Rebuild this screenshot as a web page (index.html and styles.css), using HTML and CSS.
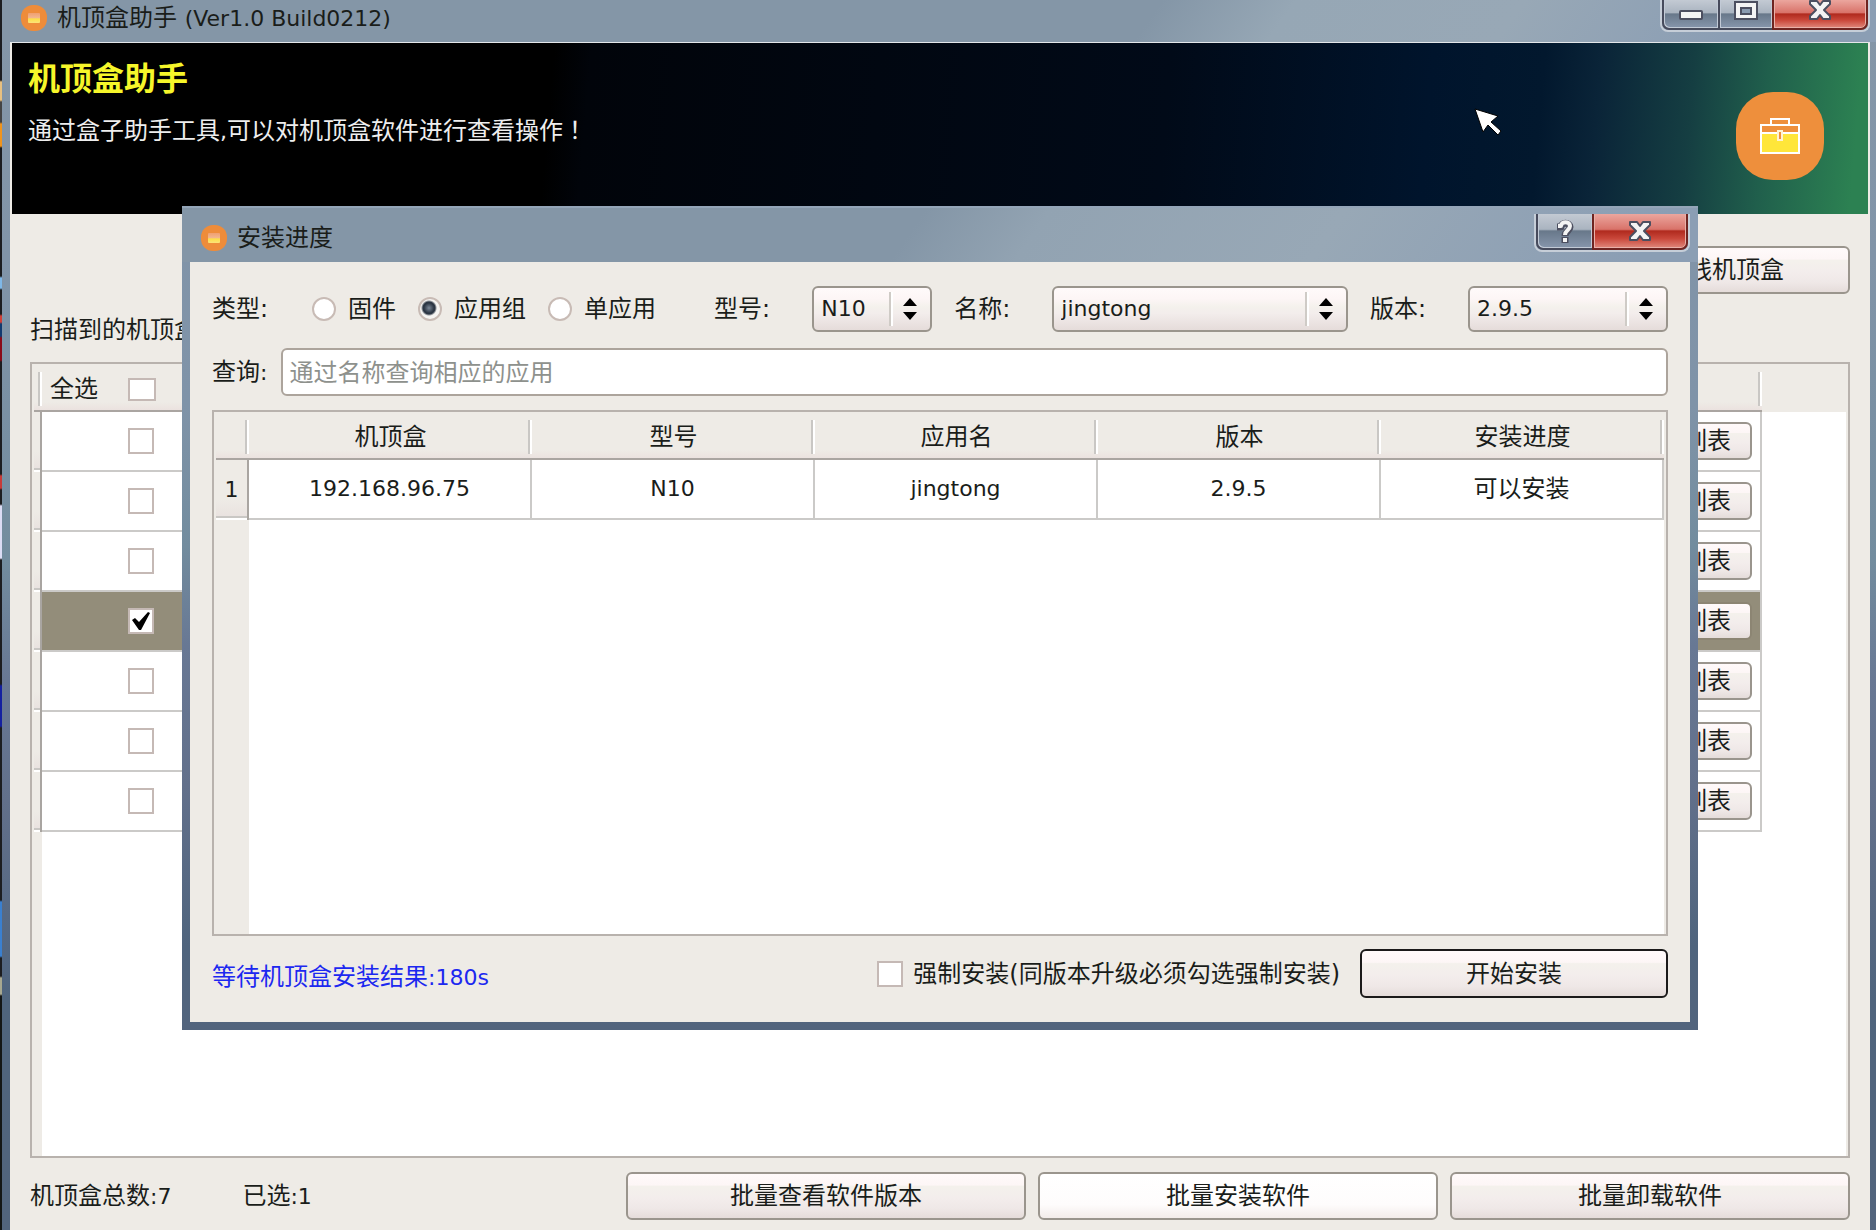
FILE: index.html
```html
<!DOCTYPE html>
<html lang="zh-CN">
<head>
<meta charset="utf-8">
<title>机顶盒助手</title>
<link rel="stylesheet" href="styles.css">
</head>
<body>
<svg class="defs" width="0" height="0" aria-hidden="true">
  <defs>
    <linearGradient id="lid" x1="0" y1="0" x2="0" y2="1">
      <stop offset="0" stop-color="#f0a070"/>
      <stop offset="0.45" stop-color="#f2b48a"/>
      <stop offset="0.6" stop-color="#fde047"/>
      <stop offset="1" stop-color="#fbe27a"/>
    </linearGradient>
    <symbol id="app-icon" viewBox="0 0 26 26">
      <rect x="0" y="0" width="26" height="26" rx="12" fill="#ee8c3a"/>
      <rect x="7" y="8" width="12" height="10" rx="1" fill="url(#lid)"/>
    </symbol>
    <symbol id="glyph-close" viewBox="0 0 24 20">
      <path d="M2 1h7l3 4 3-4h7v3l-6 6 6 6v3h-7l-3-4-3 4H2v-3l6-6-6-6z" fill="#f4f4f4" stroke="#4c4f60" stroke-width="2" stroke-linejoin="round"/>
    </symbol>
  </defs>
</svg>

<div class="window">
  <header class="titlebar">
    <div class="caption">
      <svg class="app-icon"><use href="#app-icon"/></svg>
      <span>机顶盒助手 <span class="lat">(Ver1.0 Build0212)</span></span>
    </div>
    <div class="window-buttons">
      <button class="wbtn wbtn-min" type="button" aria-label="最小化">
        <svg width="24" height="10" viewBox="0 0 24 10"><rect x="1" y="1" width="22" height="8" rx="1" fill="#f4f4f4" stroke="#4c4f60" stroke-width="2"/></svg>
      </button>
      <button class="wbtn wbtn-max" type="button" aria-label="最大化">
        <svg width="24" height="19" viewBox="0 0 24 19"><path d="M1 1h22v17H1z" fill="#f4f4f4" stroke="#4c4f60" stroke-width="2"/><path d="M7 7h10v6H7z" fill="#8a9bb0" stroke="#4c4f60" stroke-width="2"/></svg>
      </button>
      <button class="wbtn wbtn-close" type="button" aria-label="关闭"><svg width="24" height="20"><use href="#glyph-close"/></svg></button>
    </div>
  </header>

  <main class="client">
    <section class="banner">
      <div class="banner-text">
        <h1>机顶盒助手</h1>
        <p>通过盒子助手工具<span class="lat">,</span>可以对机顶盒软件进行查看操作<span class="centered-mark" lang="zh-TW">！</span></p>
      </div>
      <svg class="toolbox" width="88" height="88" viewBox="0 0 88 88">
        <rect width="88" height="88" rx="37" fill="#ee8f3c"/>
        <path d="M25 41h38v20H25z" fill="#ffe63a"/>
        <path d="M25 33h38v28H25zM35 33v-6h18v6M25 41h38" fill="none" stroke="#fff" stroke-width="2"/>
        <path d="M42 39h4v9h-4z" fill="#ee8f3c" stroke="#fff3d0" stroke-width="2"/>
      </svg>
      <svg class="pointer" width="28" height="29" viewBox="0 0 28 29">
        <path d="M1 1l23 7-7 6 10 9-3 4-10-10-5 7z" fill="#fff" stroke="#000" stroke-width="1"/>
      </svg>
    </section>

    <div class="panel">
      <div class="scan-row"><button class="btn btn-scan" type="button">扫描在线机顶盒</button></div>
      <p class="list-label">扫描到的机顶盒</p>
      <div class="grid-box">
        <table class="grid boxes">
          <colgroup><col class="c-head"><col class="c-check"><col><col class="c-action"><col class="c-rest"></colgroup>
          <thead>
            <tr>
              <th></th>
              <th><label class="select-all">全选<input class="tick tick-wide" type="checkbox"></label></th>
              <th></th><th></th><th class="rest"></th>
            </tr>
          </thead>
          <tbody>
            <tr><th></th><td><input class="tick" type="checkbox" aria-label="选择 1"></td><td></td><td class="action"><button class="btn btn-row" type="button">软件列表</button></td><td class="rest"></td></tr>
            <tr><th></th><td><input class="tick" type="checkbox" aria-label="选择 2"></td><td></td><td class="action"><button class="btn btn-row" type="button">软件列表</button></td><td class="rest"></td></tr>
            <tr><th></th><td><input class="tick" type="checkbox" aria-label="选择 3"></td><td></td><td class="action"><button class="btn btn-row" type="button">软件列表</button></td><td class="rest"></td></tr>
            <tr class="selected"><th></th><td><input class="tick" type="checkbox" aria-label="选择 4" checked></td><td></td><td class="action"><button class="btn btn-row" type="button">软件列表</button></td><td class="rest"></td></tr>
            <tr><th></th><td><input class="tick" type="checkbox" aria-label="选择 5"></td><td></td><td class="action"><button class="btn btn-row" type="button">软件列表</button></td><td class="rest"></td></tr>
            <tr><th></th><td><input class="tick" type="checkbox" aria-label="选择 6"></td><td></td><td class="action"><button class="btn btn-row" type="button">软件列表</button></td><td class="rest"></td></tr>
            <tr><th></th><td><input class="tick" type="checkbox" aria-label="选择 7"></td><td></td><td class="action"><button class="btn btn-row" type="button">软件列表</button></td><td class="rest"></td></tr>
          </tbody>
        </table>
      </div>
      <footer class="actions">
        <div class="counts">
          <span>机顶盒总数<span class="lat">:7</span></span>
          <span>已选<span class="lat">:1</span></span>
        </div>
        <button class="btn" type="button">批量查看软件版本</button>
        <button class="btn btn-hot" type="button">批量安装软件</button>
        <button class="btn" type="button">批量卸载软件</button>
      </footer>
    </div>
  </main>
</div>

<div class="dialog" role="dialog" aria-labelledby="dialog-title">
  <header class="dialog-titlebar">
    <div class="caption">
      <svg class="app-icon"><use href="#app-icon"/></svg>
      <span id="dialog-title">安装进度</span>
    </div>
    <div class="window-buttons">
      <button class="wbtn wbtn-help" type="button" aria-label="帮助">
        <svg width="22" height="26" viewBox="0 0 22 26"><g fill="none" stroke-linejoin="round"><path d="M3 9h4c0-5 9-5 9 0 0 4-5 4-5 9M11 19v6" stroke="#4c4f60" stroke-width="7"/><path d="M4 8h3c0-5 9-5 9 0 0 4-5 4-5 9M11 20v4" stroke="#f4f4f4" stroke-width="4"/></g></svg>
      </button>
      <button class="wbtn wbtn-close" type="button" aria-label="关闭"><svg width="24" height="20"><use href="#glyph-close"/></svg></button>
    </div>
  </header>
  <form class="dialog-body">
    <div class="filters">
      <div class="types" role="radiogroup" aria-labelledby="type-label">
        <span id="type-label" class="types-label">类型:</span>
        <label><input class="dot" type="radio" name="type">固件</label>
        <label><input class="dot" type="radio" name="type" checked>应用组</label>
        <label><input class="dot" type="radio" name="type">单应用</label>
      </div>
      <div class="field">
        <label for="model">型号:</label>
        <select id="model" class="pick pick-model"><option>N10</option></select>
      </div>
      <div class="field field-grow">
        <label for="name">名称:</label>
        <select id="name" class="pick pick-name"><option>jingtong</option></select>
      </div>
      <div class="field">
        <label for="version">版本:</label>
        <select id="version" class="pick pick-version"><option>2.9.5</option></select>
      </div>
    </div>
    <div class="query">
      <label for="query">查询<span class="lat">:</span></label>
      <input id="query" type="text" placeholder="通过名称查询相应的应用">
    </div>
    <div class="grid-box progress-box">
      <table class="grid progress">
        <colgroup><col class="c-num"><col><col><col><col><col></colgroup>
        <thead>
          <tr><th></th><th>机顶盒</th><th>型号</th><th>应用名</th><th>版本</th><th>安装进度</th></tr>
        </thead>
        <tbody>
          <tr><th class="lat">1</th><td class="lat">192.168.96.75</td><td class="lat">N10</td><td class="lat">jingtong</td><td class="lat">2.9.5</td><td>可以安装</td></tr>
        </tbody>
      </table>
    </div>
    <div class="dialog-footer">
      <p class="status">等待机顶盒安装结果<span class="lat">:180s</span></p>
      <label class="force"><input class="tick" type="checkbox"><span>强制安装(同版本升级必须勾选强制安装)</span></label>
      <button class="btn btn-default" type="button">开始安装</button>
    </div>
  </form>
</div>
</body>
</html>
```

FILE: styles.css
```css
:root {
  --face: #eeebe6;
  --line: #b8b2ad;
  --cell: #cbcac8;
  --frame: linear-gradient(180deg, #8496a7 0, #8194a8 260px, #728c9e 560px, #687894 680px, #62708b 800px, #4f647d 1000px, #52647d 100%);
}

* { box-sizing: border-box; }

body {
  margin: 0;
  min-height: 100vh;
  display: flex;
  position: relative;
  padding-left: 2px;
  font: 24px/32px "DejaVu Sans", "Noto Sans CJK SC", sans-serif;
  color: #1a1d1a;
  background: linear-gradient(180deg, #1c1d20 80px, #e8c080 82px 100px, #444 102px 122px, #f0941c 124px 146px, #1c1d20 148px 276px, #7fb8e8 278px 288px, #1c1d20 290px 314px, #d04038 316px 322px, #123a70 324px 336px, #8a0a18 338px 360px, #1c1d20 362px 474px, #c83a38 476px 488px, #1c1d20 490px 504px, #dcdcf4 506px 558px, #1c1d20 560px 684px, #1420a0 686px 726px, #1c1d20 728px 900px, #3a80d0 902px 956px, #1c1d20 958px 976px, #a8a890 978px 994px, #141616 996px);
}

.defs { position: absolute; }
.lat { font-size: 22px; }
h1, p { margin: 0; font-weight: 400; }
button, input, select { font: inherit; color: inherit; margin: 0; }

/* Window frames */
.window {
  flex: 1;
  display: flex;
  flex-direction: column;
  padding: 0 6px 0 8px;
  background: var(--frame);
}

.titlebar {
  display: flex;
  justify-content: space-between;
  height: 42px;
  margin: 0 -6px 0 -8px;
  padding: 0 6px 0 19px;
  background: linear-gradient(125deg, #8496a7 0 61%, #96a7b5 68%, #98a8b6 80%, #8b9eb4 92%, #8b9eb4 100%);
}

.caption { display: flex; align-items: center; gap: 10px; }
.titlebar .caption { height: 36px; }
.app-icon { width: 26px; height: 26px; }

.window-buttons {
  display: flex;
  border: solid #c6ced8;
  border-width: 0 2px 2px;
  border-radius: 0 0 8px 8px;
}
.titlebar .window-buttons { height: 32px; }

.wbtn {
  display: flex;
  align-items: center;
  justify-content: center;
  width: 54px;
  padding: 0;
  border: solid #474b5c;
  border-width: 0 0 2px 2px;
  background: linear-gradient(180deg, #c3cad3 0, #aab4c0 45%, #68788a 50%, #8796ac 100%);
  box-shadow: inset 1px -1px 0 #c2cad6, inset -1px 0 0 #c2cad6;
}
.wbtn:first-child { border-radius: 0 0 0 7px; width: 56px; }
.wbtn-min { align-items: flex-end; padding-bottom: 8px; }
.titlebar .wbtn-max, .titlebar .wbtn-close { padding-bottom: 8px; }
.wbtn-close {
  width: 96px;
  border-color: #6f2420;
  border-right-width: 2px;
  border-radius: 0 0 7px 0;
  background: linear-gradient(180deg, #eba69e 0, #d9736a 45%, #b02a1e 50%, #c9473a 72%, #e0887c 100%);
  box-shadow: inset 1px -1px 0 #e9b0a8, inset -1px 0 0 #e9b0a8;
}

.client {
  flex: 1;
  display: flex;
  flex-direction: column;
  border: 0 solid #e4e7ea;
  border-top-width: 1px;
  background: var(--face);
}

/* Banner */
.banner {
  position: relative;
  display: flex;
  justify-content: space-between;
  height: 171px;
  margin: 0 2px;
  padding: 20px 44px 0 16px;
  color: #eee;
  background: linear-gradient(95deg, #000 0 29%, #01040a 31%, #010a18 62%, #00142c 76%, #02182e 82%, #0a2438 85%, #153e42 90%, #205f4c 94%, #2c8152 99%);
}
.banner h1 { font-size: 32px; line-height: 32px; font-weight: 700; color: #f6f62a; }
.banner p { margin-top: 18px; }
.centered-mark { font-family: "Noto Sans CJK TC", sans-serif; }
.toolbox { margin-top: 29px; }
.pointer { position: absolute; left: 1462px; top: 65px; }

/* Main panel */
.panel { flex: 1; display: flex; flex-direction: column; padding: 32px 20px 10px; }
.scan-row { display: flex; justify-content: flex-end; }
.list-label { margin: 20px 0 16px; }

.btn {
  height: 48px;
  padding: 0;
  border: 2px solid #9a958d;
  border-radius: 6px;
  background: linear-gradient(180deg, #fffafa 0, #fdf6f6 25%, #f4f1ec 28%, #f3edec 55%, #efe8e7 78%, #e5dcda 100%);
}
.btn-scan { width: 300px; }
.btn-hot { background: linear-gradient(180deg, #fff 0, #fefcfc 70%, #f3ecea 100%); }
.btn-default { border-color: #1b1a1a; }
.btn-row { display: block; width: 138px; height: 38px; line-height: 32px; }

.grid-box { border: 2px solid var(--line); padding: 0 2px; background: #fff; }
.panel .grid-box {
  flex: 1;
  min-height: 796px;
  background: linear-gradient(90deg, var(--face) 10px, #fff 10px calc(100% - 2px), var(--face) 0);
}

.grid { width: 100%; table-layout: fixed; border-collapse: separate; border-spacing: 0; }
.grid th, .grid td { padding: 0; font-weight: 400; }
.grid thead th {
  height: 48px;
  padding-top: 4px;
  border-bottom: 2px solid #aaa5a1;
  background:
    linear-gradient(#c9c7c4, #c9c7c4) right 2px top 8px / 2px 34px no-repeat,
    linear-gradient(#fff, #fff) right 0 top 8px / 2px 34px no-repeat,
    linear-gradient(180deg, var(--face) 0 38px, #ebe2df 46px);
}
.grid tbody td {
  height: 60px;
  border: solid var(--cell);
  border-width: 0 2px 2px 0;
  background: #fff;
}
.grid tbody th {
  border-right: 2px solid #a9a5a1;
  background:
    linear-gradient(#c9c7c4, #c9c7c4) left 0 bottom 2px / 100% 2px no-repeat,
    linear-gradient(#fff, #fff) left 0 bottom 0 / 100% 2px no-repeat,
    linear-gradient(180deg, var(--face) 40px, #e8e0de 60px);
}

.c-head { width: 8px; }
.c-check { width: 240px; }
.c-action { width: 240px; }
.c-rest { width: 84px; }
.grid thead th.rest { background: var(--face); border-bottom-color: var(--face); }
.grid tbody td.rest { border: 0; }
.boxes tbody td:nth-child(2) { padding-left: 86px; border-right: 0; }
.boxes .action .btn { margin-left: auto; margin-right: 8px; }
.boxes .selected td:not(.rest) { background: #938d7a; }
.boxes .selected .btn { border-color: #8c8573; }
.select-all { display: flex; align-items: center; gap: 30px; padding-left: 8px; }

.tick {
  appearance: none;
  display: block;
  flex: none;
  width: 26px;
  height: 26px;
  border: 2px solid #c5b9b5;
  background: #fff;
}
.tick-wide { width: 28px; height: 23px; }
.tick:checked {
  background: #fff url("data:image/svg+xml,%3Csvg xmlns='http://www.w3.org/2000/svg' width='22' height='22'%3E%3Cpath d='M2 10l3-2 4 4 9-10 2 1-9 17H9z'/%3E%3C/svg%3E") center no-repeat;
}

.actions { display: grid; grid-template-columns: 584px 1fr 1fr 1fr; column-gap: 12px; margin-top: 14px; }
.counts { display: flex; align-items: center; gap: 71px; }

/* Install dialog */
.dialog {
  position: absolute;
  left: 182px;
  right: 178px;
  top: 206px;
  padding: 0 8px 8px;
  background:
    linear-gradient(125deg, #8496a7 0 48%, #92a3b2 56%, #98a8b6 75%, #8b9eb4 96%) top / 100% 56px no-repeat,
    linear-gradient(180deg, #8194a8 0, #7f93a8 200px, #728c9e 340px, #687894 440px, #62708b 580px, #4f647d 740px, #52647d 100%);
  box-shadow: inset 0 2px 0 #94a5b8;
}
.dialog-titlebar { display: flex; justify-content: space-between; height: 56px; padding: 8px 0 10px 11px; }
.dialog .caption { height: 48px; }

.dialog-body { padding: 24px 22px; background: var(--face); }
.filters { display: flex; gap: 22px; height: 46px; }
.types { display: flex; align-items: center; gap: 22px; margin-right: 36px; }
.types label { display: flex; align-items: center; gap: 12px; }
.types-label { margin-right: 22px; }
.field { display: flex; align-items: center; gap: 42px; }
.field-grow { flex: 1; }

.dot {
  appearance: none;
  width: 24px;
  height: 24px;
  border: 2px solid #c8bbb5;
  border-radius: 50%;
  background: #fff;
}
.dot:checked { background: radial-gradient(circle at 9px 9px, #7c8898 0, #2c3644 5px, #2c3644 6px, transparent 8px), #f6f4f2; }

.pick {
  appearance: none;
  height: 46px;
  padding: 0 44px 0 7px;
  border: 2px solid #9a958d;
  border-radius: 6px;
  font-size: 22px;
  background:
    url("data:image/svg+xml,%3Csvg xmlns='http://www.w3.org/2000/svg' width='14' height='22'%3E%3Cpath d='M7 0l7 8H0zM7 22l7-8H0z'/%3E%3C/svg%3E") right 13px center no-repeat,
    linear-gradient(#cfcbc6, #cfcbc6) right 39px center / 2px 34px no-repeat,
    linear-gradient(#fff, #fff) right 37px center / 2px 34px no-repeat,
    linear-gradient(180deg, #fffafa 0, #fdf6f6 25%, #f4f1ec 45%, #f3edec 60%, #e5dcda 100%);
}
.pick-model { width: 120px; }
.pick-name { flex: 1; min-width: 0; }
.pick-version { width: 200px; }

.query { display: flex; align-items: center; gap: 14px; margin-top: 16px; }
.query input {
  flex: 1;
  min-width: 0;
  height: 48px;
  padding: 2px 6px 0;
  border: 2px solid #aca49c;
  border-radius: 6px;
  background: #fff;
}
.query input::placeholder { color: #8e918d; opacity: 1; }

.progress-box {
  height: 526px;
  margin-top: 14px;
  background: linear-gradient(90deg, var(--face) 35px, #fff 35px calc(100% - 2px), var(--face) 0);
}
.progress { text-align: center; }
.c-num { width: 33px; }

.dialog-footer { display: flex; align-items: center; margin-top: 13px; gap: 20px; }
.status { flex: 1; padding-top: 8px; color: #1c28f0; }
.force { display: flex; align-items: center; gap: 10px; }
.btn-default { width: 308px; height: 49px; }
```
